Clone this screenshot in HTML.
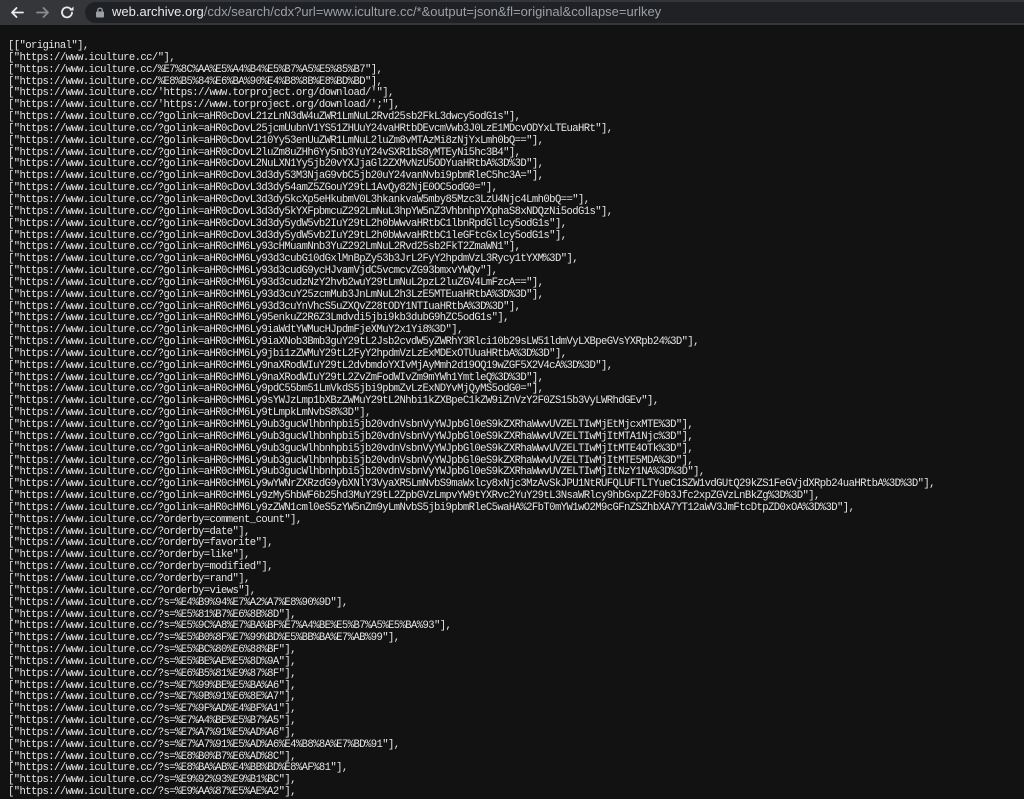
<!DOCTYPE html>
<html><head><meta charset="utf-8"><style>
html,body{margin:0;padding:0;background:#121212;width:1024px;height:786px;overflow:hidden}
.bar{position:absolute;left:0;top:0;width:1024px;height:25px;background:#35363a}
.pill{position:absolute;left:85px;top:2px;width:960px;height:21px;border-radius:11px;background:#202124}
.url{position:absolute;left:112px;top:4px;font:13px "Liberation Sans",sans-serif;color:#9aa0a6;white-space:nowrap}
.url b{font-weight:normal;color:#e8eaed}
pre{position:absolute;left:8px;top:41px;margin:0;font:10.6px/11.84px "Liberation Mono",monospace;letter-spacing:-0.6px;color:#e6e6e6;white-space:pre}
</style></head><body>
<div class="bar">
<svg style="position:absolute;left:0;top:0" width="85" height="25">
<g stroke="#e8eaed" stroke-width="1.8" fill="none" stroke-linecap="round" stroke-linejoin="round">
<path d="M23 12.5H12M16.5 8L12 12.5L16.5 17"/>
<path d="M37 12.5H48M43.5 8L48 12.5L43.5 17" stroke="#8a8b8e"/>
<path d="M72 12.5A5 5 0 1 1 70.5 8.8"/>
</g>
<path d="M73.5 6.5V10.5H69.5Z" fill="#e8eaed"/>
</svg>
<div class="pill"></div>
<svg style="position:absolute;left:95px;top:7px" width="10" height="11"><rect x="1" y="4.5" width="8" height="6" rx="1" fill="#9aa0a6"/><path d="M2.8 5V3.3a2.2 2.2 0 0 1 4.4 0V5" stroke="#9aa0a6" stroke-width="1.3" fill="none"/></svg>
<div class="url"><b>web.archive.org</b>/cdx/search/cdx?url=www.iculture.cc/*&amp;output=json&amp;fl=original&amp;collapse=urlkey</div>
</div>
<pre>[["original"],
["https://www.iculture.cc/"],
["https://www.iculture.cc/%E7%8C%AA%E5%A4%B4%E5%B7%A5%E5%85%B7"],
["https://www.iculture.cc/%E8%B5%84%E6%BA%90%E4%B8%8B%E8%BD%BD"],
["https://www.iculture.cc/'https://www.torproject.org/download/'"],
["https://www.iculture.cc/'https://www.torproject.org/download/';"],
["https://www.iculture.cc/?golink=aHR0cDovL21zLnN3dW4uZWR1LmNuL2Rvd25sb2FkL3dwcy5odG1s"],
["https://www.iculture.cc/?golink=aHR0cDovL25jcmUubnV1YS51ZHUuY24vaHRtbDEvcmVwb3J0LzE1MDcvODYxLTEuaHRt"],
["https://www.iculture.cc/?golink=aHR0cDovL210Yy53enUuZWR1LmNuL2luZm8vMTAzMi8zNjYxLmh0bQ=="],
["https://www.iculture.cc/?golink=aHR0cDovL2luZm8uZHh6Yy5nb3YuY24vSXR1bS8yMTEyNi5hc3B4"],
["https://www.iculture.cc/?golink=aHR0cDovL2NuLXN1Yy5jb20vYXJjaGl2ZXMvNzU5ODYuaHRtbA%3D%3D"],
["https://www.iculture.cc/?golink=aHR0cDovL3d3dy53M3NjaG9vbC5jb20uY24vanNvbi9pbmRleC5hc3A="],
["https://www.iculture.cc/?golink=aHR0cDovL3d3dy54amZ5ZGouY29tL1AvQy82NjE0OC5odG0="],
["https://www.iculture.cc/?golink=aHR0cDovL3d3dy5kcXp5eHkubmV0L3hkankvaW5mby85Mzc3LzU4Njc4Lmh0bQ=="],
["https://www.iculture.cc/?golink=aHR0cDovL3d3dy5kYXFpbmcuZ292LmNuL3hpYW5nZ3VhbnhpYXphaS8xNDQzNi5odG1s"],
["https://www.iculture.cc/?golink=aHR0cDovL3d3dy5ydW5vb2IuY29tL2h0bWwvaHRtbC1lbnRpdGllcy5odG1s"],
["https://www.iculture.cc/?golink=aHR0cDovL3d3dy5ydW5vb2IuY29tL2h0bWwvaHRtbC1leGFtcGxlcy5odG1s"],
["https://www.iculture.cc/?golink=aHR0cHM6Ly93cHMuamNnb3YuZ292LmNuL2Rvd25sb2FkT2ZmaWN1"],
["https://www.iculture.cc/?golink=aHR0cHM6Ly93d3cubG10dGxlMnBpZy53b3JrL2FyY2hpdmVzL3Rycy1tYXM%3D"],
["https://www.iculture.cc/?golink=aHR0cHM6Ly93d3cudG9ycHJvamVjdC5vcmcvZG93bmxvYWQv"],
["https://www.iculture.cc/?golink=aHR0cHM6Ly93d3cudzNzY2hvb2wuY29tLmNuL2pzL2luZGV4LmFzcA=="],
["https://www.iculture.cc/?golink=aHR0cHM6Ly93d3cuY25zcmMub3JnLmNuL2h3LzE5MTEuaHRtbA%3D%3D"],
["https://www.iculture.cc/?golink=aHR0cHM6Ly93d3cuYnVhcS5uZXQvZ28tODY1NTIuaHRtbA%3D%3D"],
["https://www.iculture.cc/?golink=aHR0cHM6Ly95enkuZ2R6Z3Lmdvdi5jbi9kb3dubG9hZC5odG1s"],
["https://www.iculture.cc/?golink=aHR0cHM6Ly9iaWdtYWMucHJpdmFjeXMuY2x1Yi8%3D"],
["https://www.iculture.cc/?golink=aHR0cHM6Ly9iaXNob3Bmb3guY29tL2Jsb2cvdW5yZWRhY3Rlci10b29sLW51ldmVyLXBpeGVsYXRpb24%3D"],
["https://www.iculture.cc/?golink=aHR0cHM6Ly9jbi1zZWMuY29tL2FyY2hpdmVzLzExMDExOTUuaHRtbA%3D%3D"],
["https://www.iculture.cc/?golink=aHR0cHM6Ly9naXRodWIuY29tL2dvbmdoYXIvMjAyMmh2d19OQ19wZGF5X2V4cA%3D%3D"],
["https://www.iculture.cc/?golink=aHR0cHM6Ly9naXRodWIuY29tL2ZvZmFodWIvZm9mYWh1YmtleQ%3D%3D"],
["https://www.iculture.cc/?golink=aHR0cHM6Ly9pdC55bm51LmVkdS5jbi9pbmZvLzExNDYvMjQyMS5odG0="],
["https://www.iculture.cc/?golink=aHR0cHM6Ly9sYWJzLmp1bXBzZWMuY29tL2Nhbi1kZXBpeC1kZW9iZnVzY2F0ZS15b3VyLWRhdGEv"],
["https://www.iculture.cc/?golink=aHR0cHM6Ly9tLmpkLmNvbS8%3D"],
["https://www.iculture.cc/?golink=aHR0cHM6Ly9ub3gucWlhbnhpbi5jb20vdnVsbnVyYWJpbGl0eS9kZXRhaWwvUVZELTIwMjEtMjcxMTE%3D"],
["https://www.iculture.cc/?golink=aHR0cHM6Ly9ub3gucWlhbnhpbi5jb20vdnVsbnVyYWJpbGl0eS9kZXRhaWwvUVZELTIwMjItMTA1Njc%3D"],
["https://www.iculture.cc/?golink=aHR0cHM6Ly9ub3gucWlhbnhpbi5jb20vdnVsbnVyYWJpbGl0eS9kZXRhaWwvUVZELTIwMjItMTE4OTk%3D"],
["https://www.iculture.cc/?golink=aHR0cHM6Ly9ub3gucWlhbnhpbi5jb20vdnVsbnVyYWJpbGl0eS9kZXRhaWwvUVZELTIwMjItMTE5MDA%3D"],
["https://www.iculture.cc/?golink=aHR0cHM6Ly9ub3gucWlhbnhpbi5jb20vdnVsbnVyYWJpbGl0eS9kZXRhaWwvUVZELTIwMjItNzY1NA%3D%3D"],
["https://www.iculture.cc/?golink=aHR0cHM6Ly9wYWNrZXRzdG9ybXNlY3VyaXR5LmNvbS9maWxlcy8xNjc3MzAvSkJPU1NtRUFQLUFTLTYueC1SZW1vdGUtQ29kZS1FeGVjdXRpb24uaHRtbA%3D%3D"],
["https://www.iculture.cc/?golink=aHR0cHM6Ly9zMy5hbWF6b25hd3MuY29tL2ZpbGVzLmpvYW9tYXRvc2YuY29tL3NsaWRlcy9hbGxpZ2F0b3Jfc2xpZGVzLnBkZg%3D%3D"],
["https://www.iculture.cc/?golink=aHR0cHM6Ly9zZWN1cml0eS5zYW5nZm9yLmNvbS5jbi9pbmRleC5waHA%2FbT0mYW1wO2M9cGFnZSZhbXA7YT12aWV3JmFtcDtpZD0xOA%3D%3D"],
["https://www.iculture.cc/?orderby=comment_count"],
["https://www.iculture.cc/?orderby=date"],
["https://www.iculture.cc/?orderby=favorite"],
["https://www.iculture.cc/?orderby=like"],
["https://www.iculture.cc/?orderby=modified"],
["https://www.iculture.cc/?orderby=rand"],
["https://www.iculture.cc/?orderby=views"],
["https://www.iculture.cc/?s=%E4%B9%94%E7%A2%A7%E8%90%9D"],
["https://www.iculture.cc/?s=%E5%81%B7%E6%8B%8D"],
["https://www.iculture.cc/?s=%E5%9C%A8%E7%BA%BF%E7%A4%BE%E5%B7%A5%E5%BA%93"],
["https://www.iculture.cc/?s=%E5%B0%8F%E7%99%BD%E5%BB%BA%E7%AB%99"],
["https://www.iculture.cc/?s=%E5%BC%80%E6%88%BF"],
["https://www.iculture.cc/?s=%E5%BE%AE%E5%8D%9A"],
["https://www.iculture.cc/?s=%E6%B5%81%E9%87%8F"],
["https://www.iculture.cc/?s=%E7%99%BE%E5%BA%A6"],
["https://www.iculture.cc/?s=%E7%9B%91%E6%8E%A7"],
["https://www.iculture.cc/?s=%E7%9F%AD%E4%BF%A1"],
["https://www.iculture.cc/?s=%E7%A4%BE%E5%B7%A5"],
["https://www.iculture.cc/?s=%E7%A7%91%E5%AD%A6"],
["https://www.iculture.cc/?s=%E7%A7%91%E5%AD%A6%E4%B8%8A%E7%BD%91"],
["https://www.iculture.cc/?s=%E8%B0%B7%E6%AD%8C"],
["https://www.iculture.cc/?s=%E8%BA%AB%E4%BB%BD%E8%AF%81"],
["https://www.iculture.cc/?s=%E9%92%93%E9%B1%BC"],
["https://www.iculture.cc/?s=%E9%AA%87%E5%AE%A2"],
</pre>
</body></html>
